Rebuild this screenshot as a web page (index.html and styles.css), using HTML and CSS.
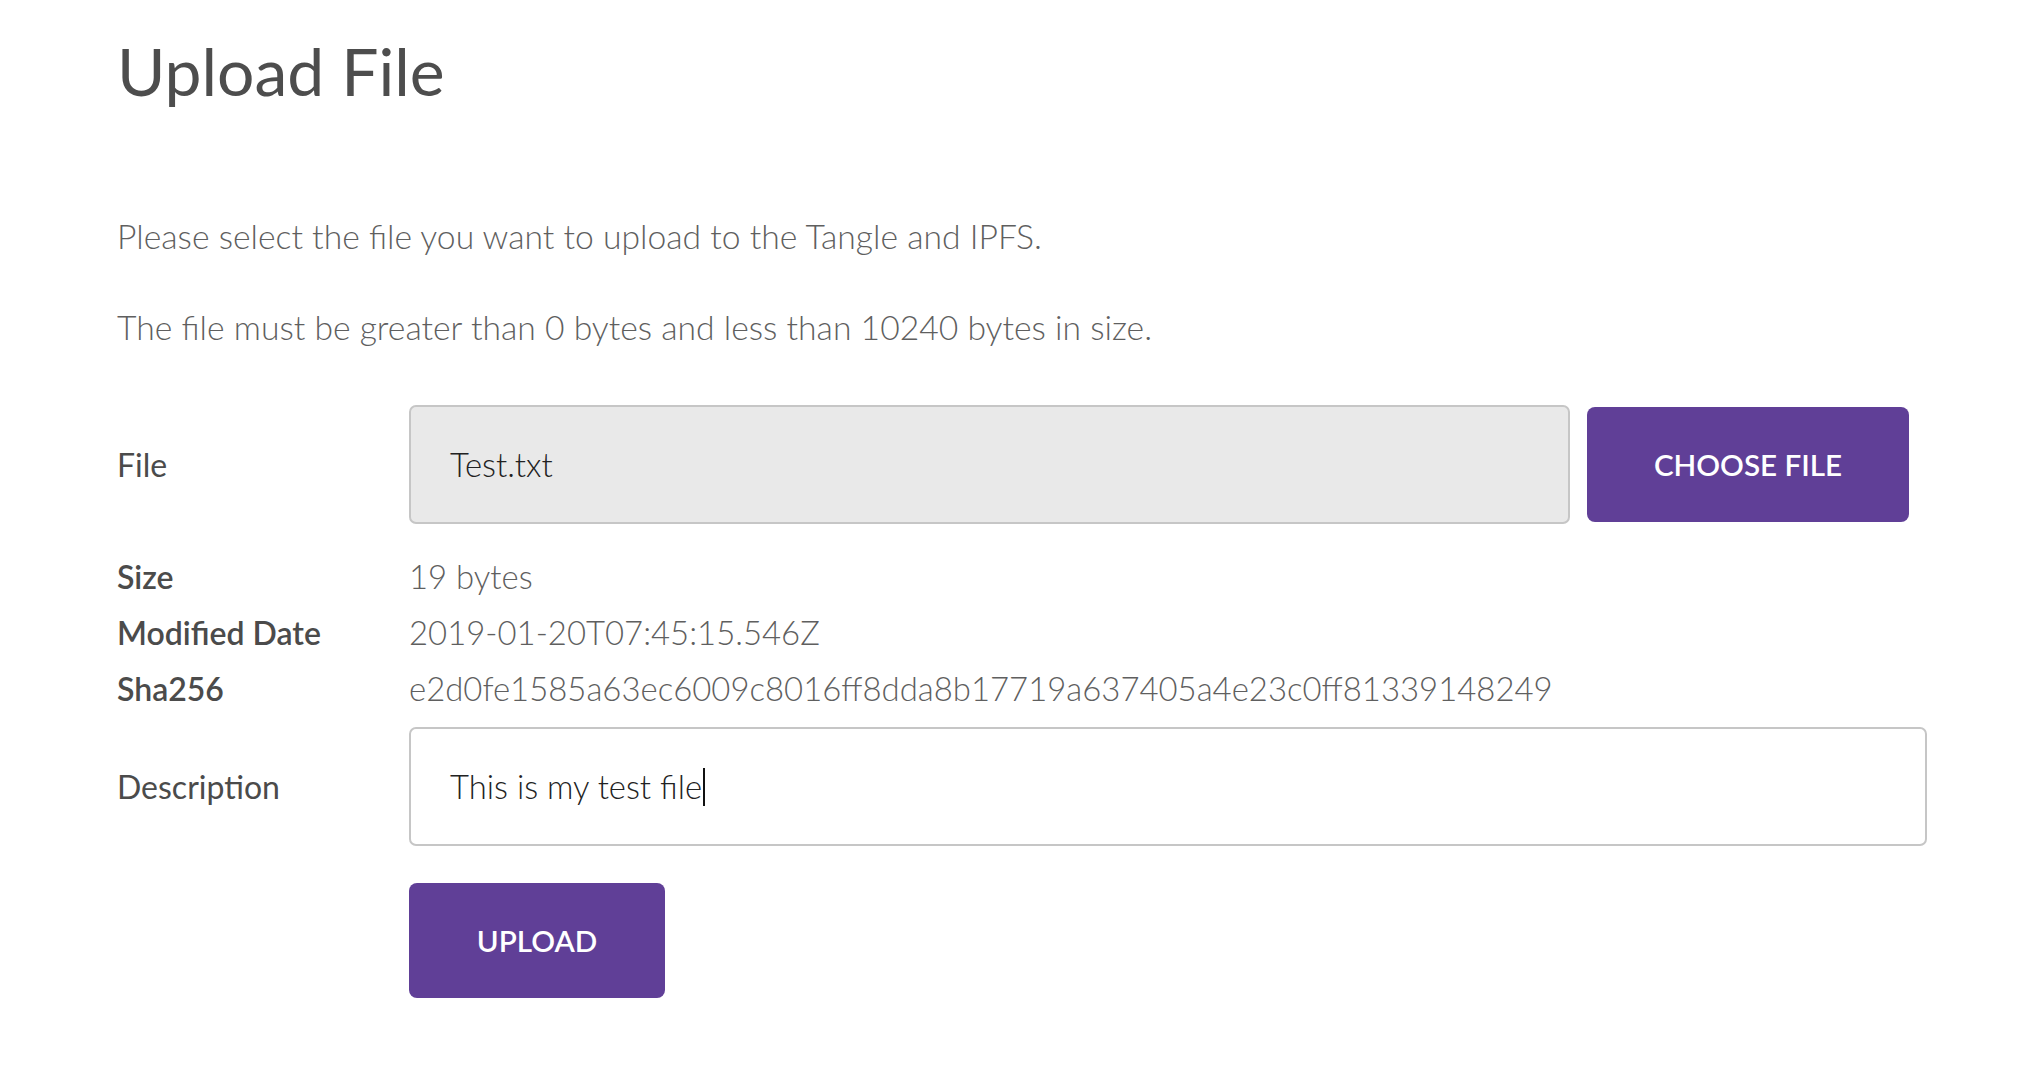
FILE: index.html
```html
<!DOCTYPE html>
<html lang="en">
<head>
<meta charset="utf-8">
<title>Upload File</title>
<link rel="stylesheet" href="styles.css">
</head>
<body>
<main class="page">
  <h1 class="title">Upload File</h1>
  <p class="intro intro-first">Please select the file you want to upload to the Tangle and IPFS.</p>
  <p class="intro">The file must be greater than 0 bytes and less than 10240 bytes in size.</p>

  <div class="form">
    <div class="row row-file">
      <div class="label">File</div>
      <div class="field">
        <div class="input input-readonly">Test.txt</div>
        <button class="btn btn-choose">CHOOSE FILE</button>
      </div>
    </div>

    <div class="info">
      <div class="info-row">
        <div class="label label-strong">Size</div>
        <div class="value">19 bytes</div>
      </div>
      <div class="info-row">
        <div class="label label-strong">Modified Date</div>
        <div class="value">2019-01-20T07:45:15.546Z</div>
      </div>
      <div class="info-row">
        <div class="label label-strong">Sha256</div>
        <div class="value">e2d0fe1585a63ec6009c8016ff8dda8b17719a637405a4e23c0ff81339148249</div>
      </div>
    </div>

    <div class="row row-desc">
      <div class="label">Description</div>
      <div class="input input-desc"><span class="typed">This is my test file</span><span class="caret"></span></div>
    </div>

    <div class="row row-actions">
      <div class="label"></div>
      <button class="btn btn-upload">UPLOAD</button>
    </div>
  </div>
</main>
</body>
</html>
```

FILE: styles.css
```css
html, body {
  margin: 0;
  padding: 0;
  background: #ffffff;
}

body {
  font-family: "Lato", "Open Sans", "Liberation Sans", sans-serif;
  color: #4b4b4b;
}

.page {
  padding: 31px 0 0 117px;
}

.title {
  margin: 0;
  font-size: 66px;
  font-weight: 400;
  line-height: 79px;
  color: #4d4d4d;
}

.intro {
  margin: 0;
  font-size: 33.7px;
  font-weight: 300;
  line-height: 40px;
  color: #5f5f5f;
}

.intro-first {
  margin-top: 106px;
}

.intro + .intro {
  margin-top: 51px;
}

.form {
  margin-top: 58px;
  display: flex;
  flex-direction: column;
}

.row,
.info-row {
  display: grid;
  grid-template-columns: 292px auto;
  align-items: center;
}

.label {
  font-size: 32px;
  font-weight: 400;
  color: #4b4b4b;
}

.label-strong {
  font-weight: 600;
  color: #4b4b4b;
}

.field {
  display: flex;
  align-items: center;
  gap: 17px;
}

.input {
  box-sizing: border-box;
  height: 119px;
  border: 2px solid #c6c6c6;
  border-radius: 7px;
  padding: 0 0 0 39px;
  display: flex;
  align-items: center;
  font-size: 32.8px;
  font-weight: 300;
  color: #222222;
}

.input-readonly {
  width: 1161px;
  background: #e9e9e9;
}

.input-desc {
  width: 1518px;
  height: 119px;
  background: #ffffff;
}

.caret {
  display: inline-block;
  width: 2px;
  height: 38px;
  background: #111111;
  margin-left: 1px;
}

.btn {
  box-sizing: border-box;
  border: none;
  border-radius: 8px;
  background: #603f97;
  color: #ffffff;
  font-family: "Lato", "Open Sans", "Liberation Sans", sans-serif;
  font-size: 29.6px;
  font-weight: 600;
  padding: 0;
  cursor: pointer;
}

.btn-choose {
  width: 322px;
  height: 115px;
}

.info {
  margin-top: 24px;
  display: flex;
  flex-direction: column;
}

.info-row {
  height: 56px;
}

.value {
  font-size: 32.9px;
  font-weight: 300;
  color: #5f5f5f;
}

.row-desc {
  margin-top: 11px;
}

.row-actions {
  margin-top: 37px;
}

.btn-upload {
  width: 256px;
  height: 115px;
}
```
